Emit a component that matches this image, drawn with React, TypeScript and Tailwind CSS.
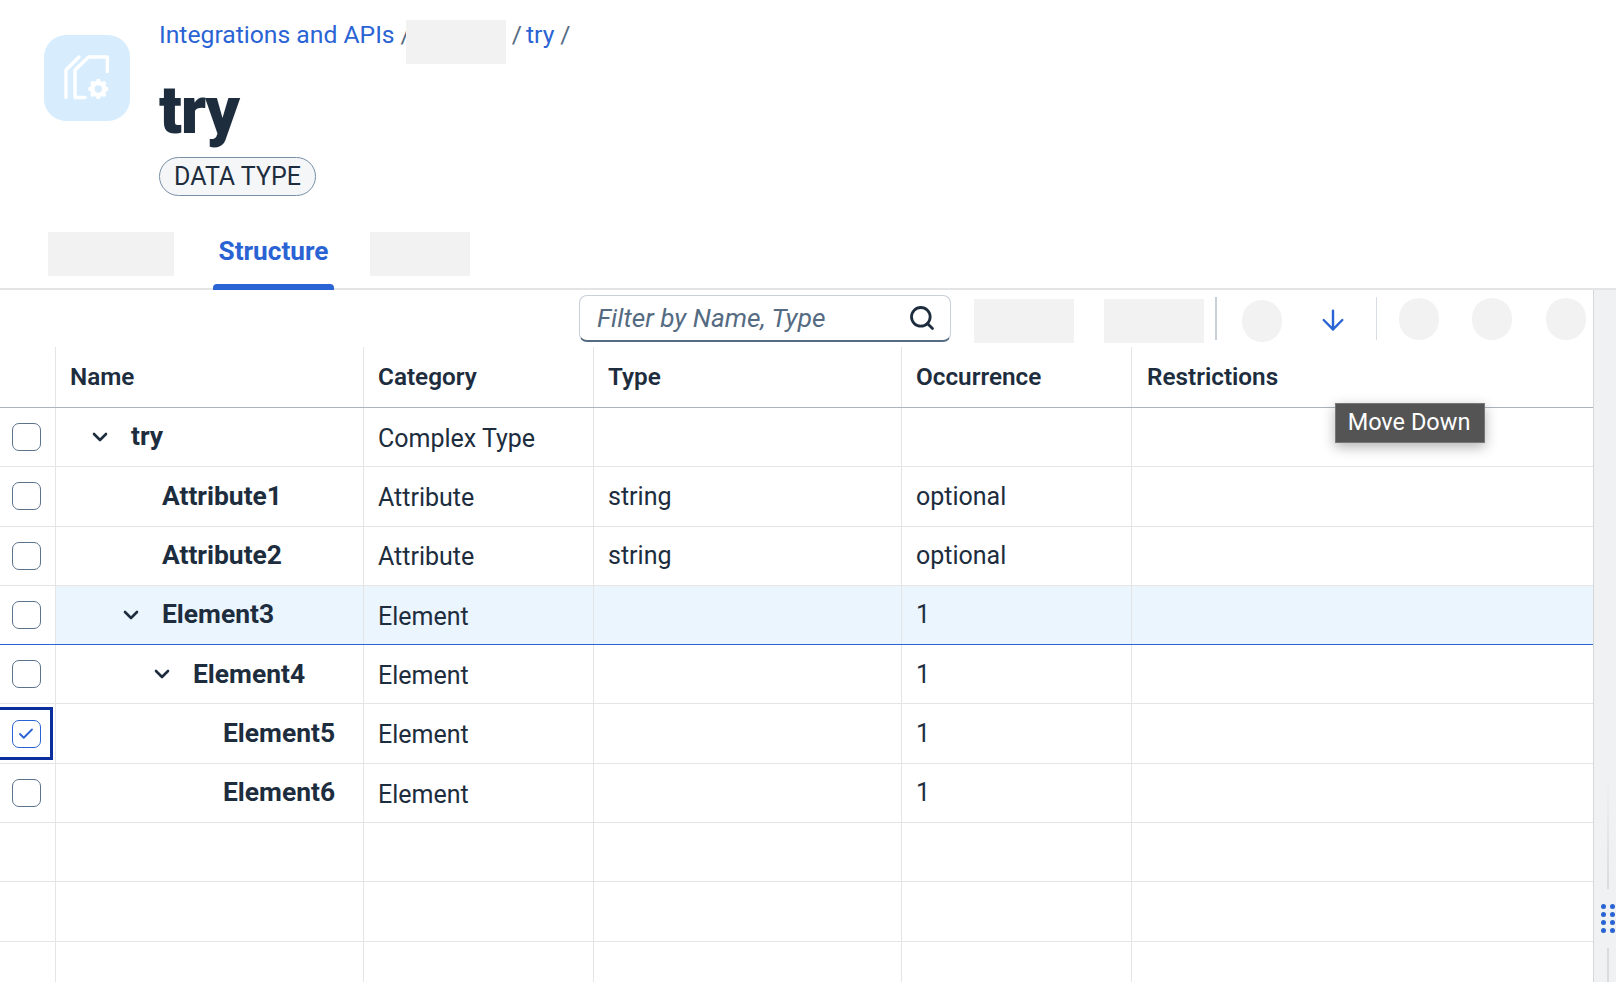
import { ArrowDown, Check, ChevronDown, Search } from 'lucide-react'

type Row = { name: string; level: number; open?: boolean; category: string; type?: string; occurrence?: string; checked?: boolean; active?: boolean }

const ROWS: Row[] = [
  { name: 'try', level: 0, open: true, category: 'Complex Type' },
  { name: 'Attribute1', level: 1, category: 'Attribute', type: 'string', occurrence: 'optional' },
  { name: 'Attribute2', level: 1, category: 'Attribute', type: 'string', occurrence: 'optional' },
  { name: 'Element3', level: 1, open: true, category: 'Element', occurrence: '1', active: true },
  { name: 'Element4', level: 2, open: true, category: 'Element', occurrence: '1' },
  { name: 'Element5', level: 3, category: 'Element', occurrence: '1', checked: true },
  { name: 'Element6', level: 3, category: 'Element', occurrence: '1' },
]

const INDENT = ['pl-[32px]', 'pl-[63px]', 'pl-[94px]', 'pl-[124px]']
const CELL = 'h-full border-r border-[#e5e5e5] flex items-center'

function PageIcon() {
  return (
    <svg viewBox="0 0 86 86" className="w-[86px] h-[86px] shrink-0 rounded-[22px] bg-[#d7edfd]">
      <g fill="none" stroke="#fff" strokeWidth="3.4" strokeLinecap="round" strokeLinejoin="round">
        <path d="M35 22 22 35v27.5" />
        <path d="M63.3 36.5V22H44.5L31 35v27.5h10" />
        <circle cx="54.3" cy="54" r="6" strokeWidth="4.6" />
      </g>
      {[0, 45, 90, 135, 180, 225, 270, 315].map((a) => (
        <rect key={a} x="52.3" y="44" width="4" height="4" rx="1" fill="#fff" transform={`rotate(${a} 54.3 54)`} />
      ))}
    </svg>
  )
}

function Box({ checked }: { checked?: boolean }) {
  return (
    <div className={`w-[29px] h-[28px] rounded-[7px] border bg-white flex items-center justify-center ${checked ? 'border-[#2a63d4]' : 'border-[#5b738b]'}`}>
      {checked && <Check size={18} strokeWidth={2.4} color="#2a63d4" />}
    </div>
  )
}

function Cells({ row }: { row?: Row }) {
  return (
    <>
      <div className={`${CELL} w-[56px] justify-center relative bg-white pr-[3px]`}>
        {row && <Box checked={row.checked} />}
        {row?.checked && <div className="absolute left-0 top-[3px] w-[53px] h-[53px] border-[3px] border-l-0 border-[#0a2f9c]" />}
      </div>
      <div className={`${CELL} w-[308px] font-bold text-[26.4px] ${row ? INDENT[row.level] : ''}`}>
        {row && (
          <div className="flex items-center">
            {row.open ? <ChevronDown size={24} strokeWidth={2.6} className="mr-[19px]" /> : <span className="w-[43px]" />}
            <span>{row.name}</span>
          </div>
        )}
      </div>
      <div className={`${CELL} w-[230px] pl-[14px]`}><span className="pt-[3px]">{row?.category}</span></div>
      <div className={`${CELL} w-[308px] pl-[14px]`}>{row?.type}</div>
      <div className={`${CELL} w-[230px] pl-[14px]`}>{row?.occurrence}</div>
      <div className="flex-1" />
    </>
  )
}

export default function App() {
  return (
    <div className="relative w-[1616px] h-[982px] overflow-hidden bg-white text-[#1d2d3e] text-[25px] font-['Roboto',sans-serif]">
      <header className="h-[290px] border-b-2 border-[#e2e4e6] flex flex-col">
        <div className="flex flex-1 pl-[44px]">
          <div className="pt-[35px]"><PageIcon /></div>
          <div className="pl-[29px] pt-[20px]">
            <div className="flex items-start h-[44px] text-[24.7px] text-[#2a63d4] leading-[30px]">
              <span>Integrations and APIs</span>
              <span className="text-[#556b82] ml-[6px]">/</span>
              <div className="w-[100px] h-[44px] bg-[#f2f2f2] -ml-[5px] mr-[6px]" />
              <span className="text-[#556b82]">/</span>
              <span className="ml-[4px]">try</span>
              <span className="text-[#556b82] ml-[6px]">/</span>
            </div>
            <div className="mt-[6px] h-[80px] text-[67px] leading-[80px] font-black tracking-[-0.02em]">try</div>
            <div className="mt-[7px] w-[157px] h-[39px] rounded-full border border-[#788fa6] bg-[#f5f6f7] flex items-center justify-center pt-[1px]">DATA TYPE</div>
          </div>
        </div>
        <div className="flex h-[56px] pl-[48px] relative">
          <div className="w-[126px] h-[44px] bg-[#f2f2f2]" />
          <div className="ml-[39px] w-[121px] h-full flex justify-center relative">
            <span className="font-bold text-[26.2px] text-[#2a63d4]">Structure</span>
            <div className="absolute left-0 right-0 bottom-[-2px] h-[6px] rounded-t-[4px] bg-[#2a63d4]" />
          </div>
          <div className="ml-[36px] w-[100px] h-[44px] bg-[#f2f2f2]" />
        </div>
      </header>

      <div className="flex h-[692px]">
        <main className="w-[1593px] overflow-hidden">
          <div className="h-[57px] flex items-start">
            <div className="ml-[579px] mt-[5px] w-[372px] h-[47px] rounded-[8px] border border-[#c8d0da] border-b-2 border-b-[#556b82] flex items-center justify-between pl-[17px] pr-[14px]">
              <span className="italic text-[26.2px] text-[#556b82] pt-[1px]">Filter by Name, Type</span>
              <Search size={28} strokeWidth={2.4} color="#1d2d3e" />
            </div>
            <div className="ml-[23px] mt-[9px] w-[100px] h-[44px] bg-[#f2f2f2]" />
            <div className="ml-[30px] mt-[9px] w-[100px] h-[44px] bg-[#f2f2f2]" />
            <div className="ml-[11px] mt-[7px] w-[2px] h-[43px] bg-[#c8d0da]" />
            <div className="ml-[25px] mt-[10px] w-[40px] h-[42px] rounded-full bg-[#f2f2f2]" />
            <ArrowDown size={32} strokeWidth={1.8} color="#2a63d4" className="ml-[35px] mt-[14px]" />
            <div className="ml-[27px] mt-[7px] w-px h-[43px] bg-[#d8dde3]" />
            <div className="ml-[22px] mt-[8px] w-[40px] h-[42px] rounded-full bg-[#f2f2f2]" />
            <div className="ml-[33px] mt-[8px] w-[40px] h-[42px] rounded-full bg-[#f2f2f2]" />
            <div className="ml-[34px] mt-[8px] w-[40px] h-[42px] rounded-full bg-[#f2f2f2]" />
          </div>

          <div className="flex h-[61px] border-b border-[#a9b4be] font-semibold text-[24.3px]">
            <div className={`${CELL} w-[56px]`} />
            <div className={`${CELL} w-[308px] pl-[14px] pt-[1px]`}>Name</div>
            <div className={`${CELL} w-[230px] pl-[14px] pt-[1px]`}>Category</div>
            <div className={`${CELL} w-[308px] pl-[14px] pt-[1px]`}>Type</div>
            <div className={`${CELL} w-[230px] pl-[14px] pt-[1px]`}>Occurrence</div>
            <div className="flex-1 flex items-center pl-[15px] pt-[1px]">Restrictions</div>
          </div>

          {ROWS.map((r) => (
            <div key={r.name} className={`flex h-[59.3px] border-b ${r.active ? 'bg-[#ebf5fe] border-[#2a63d4]' : 'border-[#e5e5e5]'}`}>
              <Cells row={r} />
            </div>
          ))}
          {[0, 1, 2].map((i) => (
            <div key={i} className="flex h-[59.3px] border-b border-[#e5e5e5]"><Cells /></div>
          ))}
        </main>

        <aside className="w-[23px] border-l border-[#d5d7d9] bg-[#eff1f2] flex flex-col items-end pr-[7px]">
          <div className="mt-[485px] h-[114px] w-[2px] bg-gradient-to-b from-[#eff1f2] to-[#d9dbdd]" />
          <div className="mt-[15px] mb-[15px] -mr-[6px] grid grid-cols-2 gap-x-[4px] gap-y-[3px]">
            {Array.from({ length: 8 }).map((_, i) => <span key={i} className="w-[5px] h-[5px] rounded-full bg-[#2a63d4]" />)}
          </div>
          <div className="flex-1 w-[2px] bg-[#d9dbdd]" />
        </aside>
      </div>

      <div className="absolute left-[1335px] top-[403px] w-[150px] h-[40px] bg-[#545454] border border-[#777] shadow-[0_4px_12px_rgba(0,0,0,0.3)] flex items-center justify-center text-[23.5px] text-white pr-[2px]">Move Down</div>
    </div>
  )
}
